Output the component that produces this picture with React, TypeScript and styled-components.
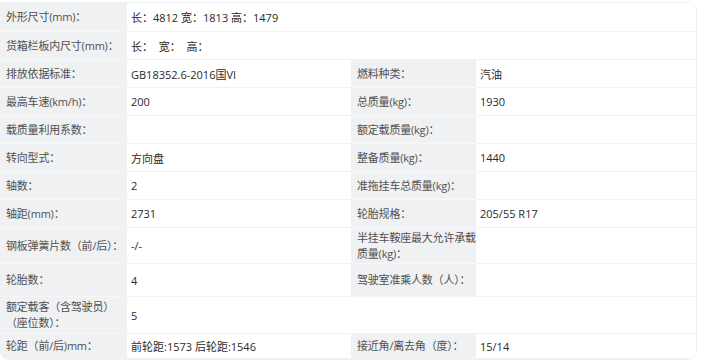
import React from 'react';
import styled, { createGlobalStyle } from 'styled-components';

const GlobalStyle = createGlobalStyle`
  html, body {
    margin: 0;
    padding: 0;
    background: #ffffff;
  }
  body {
    font-family: 'Open Sans', 'Noto Sans CJK SC', sans-serif;
  }
`;

const Table = styled.div`
  display: grid;
  grid-template-columns: 127px 224px 125px 1fr;
  grid-template-rows: 29px repeat(7, 28px) 36px 33px 37px 25px;
  width: 697px;
  margin-top: 2px;
  background: #ffffff;
  border: 1px solid #eef0f3;
  border-left: none;
  border-radius: 0 9px 9px 9px;
  overflow: hidden;
  box-sizing: border-box;
`;

const Label = styled.div<{ $blank?: boolean }>`
  display: flex;
  align-items: center;
  padding: 0 0 0 6px;
  background: ${({ $blank }) => ($blank ? '#ffffff' : '#f0f1f3')};
  color: #505050;
  font-size: 11px;
  line-height: 16px;
  letter-spacing: -0.2px;
  border-bottom: 1px solid ${({ $blank }) => ($blank ? '#f3f4f6' : '#f6f7f8')};
  white-space: pre;
`;

const Value = styled.div<{ $wide?: boolean }>`
  display: flex;
  align-items: center;
  padding: 0 4px;
  grid-column: ${({ $wide }) => ($wide ? 'span 3' : 'span 1')};
  background: #ffffff;
  color: #2a2a2a;
  font-size: 11px;
  white-space: pre;
  border-bottom: 1px solid #f0f1f4;
`;

type Cell = [string, string];

const fullRows: Cell[] = [
  ['外形尺寸(mm)：', '长：4812 宽：1813 高：1479'],
  ['货箱栏板内尺寸(mm)：', '长：  宽：  高：'],
];

const pairRows: [Cell, Cell | null][] = [
  [['排放依据标准：', 'GB18352.6-2016国VI'], ['燃料种类：', '汽油']],
  [['最高车速(km/h)：', '200'], ['总质量(kg)：', '1930']],
  [['载质量利用系数：', ''], ['额定载质量(kg)：', '']],
  [['转向型式：', '方向盘'], ['整备质量(kg)：', '1440']],
  [['轴数：', '2'], ['准拖挂车总质量(kg)：', '']],
  [['轴距(mm)：', '2731'], ['轮胎规格：', '205/55 R17']],
  [['钢板弹簧片数（前/后）：', '-/-'], ['半挂车鞍座最大允许承载\n质量(kg)：', '']],
  [['轮胎数：', '4'], ['驾驶室准乘人数（人）：', '']],
  [['额定载客（含驾驶员）\n（座位数）：', '5'], null],
  [['轮距（前/后)mm：', '前轮距:1573 后轮距:1546'], ['接近角/离去角（度）：', '15/14']],
];

export default function App(): JSX.Element {
  return (
    <>
      <GlobalStyle />
      <Table>
        {fullRows.map(([label, value]) => (
          <React.Fragment key={label}>
            <Label>{label}</Label>
            <Value $wide>{value}</Value>
          </React.Fragment>
        ))}
        {pairRows.map(([left, right], i) => (
          <React.Fragment key={`row-${i}`}>
            <Label>{left[0]}</Label>
            <Value>{left[1]}</Value>
            <Label $blank={!right}>{right ? right[0] : ''}</Label>
            <Value>{right ? right[1] : ''}</Value>
          </React.Fragment>
        ))}
      </Table>
    </>
  );
}
